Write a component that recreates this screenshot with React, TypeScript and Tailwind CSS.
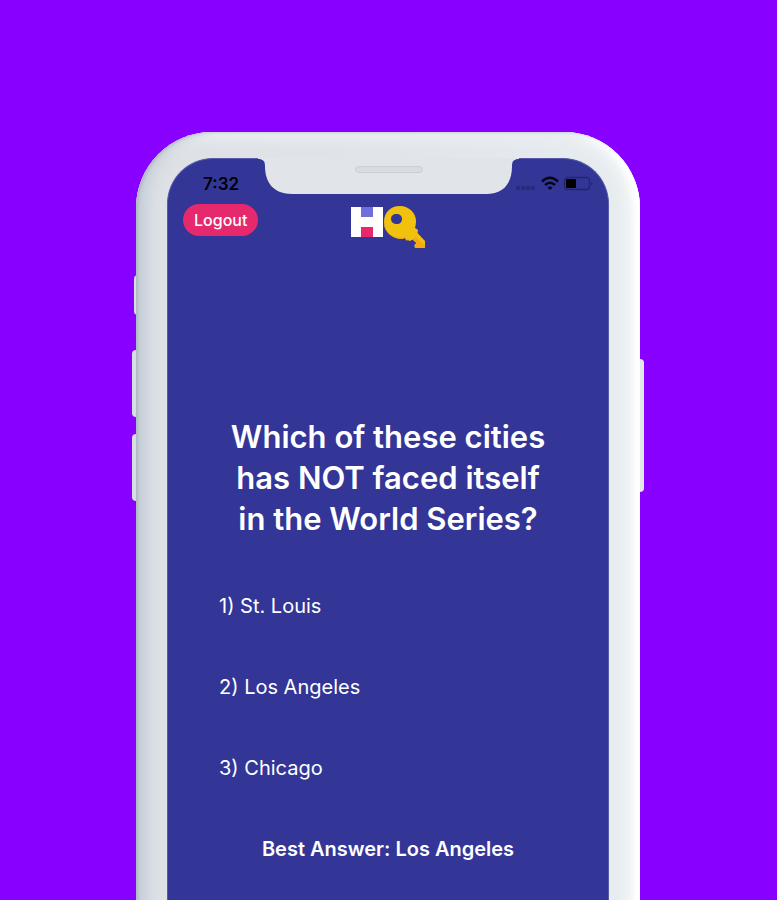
const answers = ["St. Louis", "Los Angeles", "Chicago"];

function Logo() {
  return (
    <svg role="img" aria-label="HQ" width="74" height="42" viewBox="0 0 74 42" className="block">
      <rect width="32" height="30" y="1" fill="#fff" />
      <rect x="10" y="1" width="12" height="10" fill="#6f6fdc" />
      <rect x="10" y="21" width="12" height="10" fill="#e6286c" />
      <path
        fillRule="evenodd"
        d="M49 0C58 0 65 7 65 15C65 18 64.500 20 64 22L67 24L66.500 27L74 35V42H64L63.500 39L65.500 37L61.500 33.500L59 35L57 34L55.500 34.500L54 32L51 33C41 33 33 26 33 16C33 6 40 0 49 0ZM45.500 8C42 8 40 10 40 13C40 16 42.500 18 46 18C49 18 51 16 51 13C51 10 49 8 45.500 8Z"
        fill="#f1c20d"
      />
      <path d="M61.500 33.500L64.500 30.500L74 39.500V42H64L63.500 39L65.500 37Z" fill="#f8a912" />
      <path d="M33.500 19C35 27 42 32 51 32.300L54 31.500L55.500 34L57 33.500L59 34.500" fill="none" stroke="#f5aa12" strokeWidth="1" />
    </svg>
  );
}

function StatusIcons() {
  return (
    <svg aria-hidden="true" width="78" height="16" viewBox="0 0 78 16" className="block">
      <g fill="#292b78">
        <rect x="1" y="10" width="4" height="4" rx="1" />
        <rect x="6" y="10" width="4" height="4" rx="1" />
        <rect x="11" y="10" width="4" height="4" rx="1" />
        <rect x="16" y="10" width="4" height="4" rx="1" />
      </g>
      <g fill="none" stroke="#05051a" strokeWidth="2.400">
        <path d="M27 5.500q8-7.500 16 0" />
        <path d="M30 9q5-4.500 10 0" />
      </g>
      <path d="M32.500 11.500q2.500-2 5 0L35 14z" fill="#05051a" />
      <rect x="49.500" y="1.500" width="25" height="12" rx="3" fill="none" stroke="#24266d" strokeWidth="1.300" />
      <rect x="51" y="3" width="10" height="9" rx="1" fill="#000" />
      <path d="M76 5.500q3 2 0 4z" fill="#24266d" />
    </svg>
  );
}

function Notch() {
  return (
    <div className="absolute inset-x-0 -top-px flex justify-center pl-0.5">
      <svg aria-hidden="true" width="262" height="37" viewBox="0 0 262 37" className="block">
        <path
          d="M0 0V1C5 1 7 3 7 8C7 25 16 36 34 36H228C246 36 254 25 254 8C254 3 256 1 261 1V0Z"
          fill="#e1e5ea"
        />
        <rect x="97.500" y="8.500" width="67" height="6" rx="3" fill="#d7dce1" stroke="#c8cfd6" />
      </svg>
    </div>
  );
}

export default function App() {
  return (
    <main className="flex h-screen justify-center overflow-hidden bg-[#8800ff] pt-[132px] pr-[25px] pl-6 font-['Inter','Open_Sans',sans-serif] text-white">
      <div className="relative -mb-8 w-full max-w-[504px]">
        <span className="absolute -left-0.5 top-[143px] h-10 w-2 rounded-sm bg-[#d9dee5]" />
        <span className="absolute -left-1 top-[218px] h-[67px] w-2 rounded-sm bg-[#d9dee5]" />
        <span className="absolute -left-1 top-[302px] h-[67px] w-2 rounded-sm bg-[#d9dee5]" />
        <span className="absolute -right-1 top-[227px] h-[133px] w-2 rounded-sm bg-[#e3e7ea]" />

        <div className="relative flex min-h-full flex-col rounded-t-[76px] bg-linear-to-r from-[#dde1e6] via-[#e1e5ea] to-[#e8edf0] px-[31px] pt-[26px] shadow-[inset_2px_0_3px_#aeb8c2,inset_14px_0_14px_-4px_#c3cbd4,inset_-8px_0_6px_-2px_#ffffff,inset_-14px_0_14px_-2px_#f6f9fa,inset_0_8px_14px_-2px_#eff2f5]">
          <section className="relative flex flex-1 flex-col rounded-t-[46px] border border-b-0 border-[#565aa9] bg-[#333697]">
            <Notch />
            <div className="flex h-[45px] items-center justify-between pt-1 pr-[15px] pl-[35px]">
              <time className="text-[17px] leading-6 font-semibold text-black">7:32</time>
              <StatusIcons />
            </div>
            <header className="grid grid-cols-3 items-start px-[15px]">
              <button type="button" className="h-8 justify-self-start rounded-full bg-[#e6286c] px-[11px] text-base font-medium">
                Logout
              </button>
              <div className="justify-self-center pt-0.5">
                <Logo />
              </div>
            </header>
            <h1 className="mx-auto mt-[168px] max-w-[320px] text-center text-[31px] leading-[41px] font-semibold">
              Which of these cities has NOT faced itself in the World Series?
            </h1>
            <ol className="mt-[51px] flex flex-col gap-[49px] pl-[51px] text-[20px] leading-8">
              {answers.map((answer, i) => (
                <li key={answer}>
                  {i + 1}) {answer}
                </li>
              ))}
            </ol>
            <p className="mt-[49px] text-center text-[20px] leading-8 font-semibold">Best Answer: Los Angeles</p>
          </section>
        </div>
      </div>
    </main>
  );
}
